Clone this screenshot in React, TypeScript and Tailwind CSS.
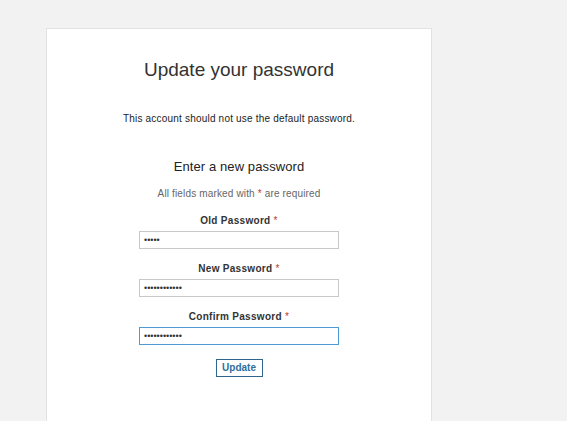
export default function App() {
  const fields = [
    { label: "Old Password", value: "12345", focus: false },
    { label: "New Password", value: "123456789012", focus: false },
    { label: "Confirm Password", value: "123456789012", focus: true },
  ]

  return (
    <div className="h-[421px] w-full overflow-hidden bg-[#f2f2f2] font-['Liberation_Sans',Arial,sans-serif]">
      <div className="ml-[46px] pt-[28px]">
        <div className="flex h-[393px] w-[386px] flex-col items-center border border-b-0 border-[#e2e2e2] bg-white text-[#333]">
          <h1 className="mt-[29px] text-[19px] leading-[24px] text-[#333]">Update your password</h1>
          <p className="mt-[31px] text-[10px] leading-[12px] tracking-[0.2px] text-[#222]">This account should not use the default password.</p>
          <h2 className="mt-[34px] text-[13px] leading-[16px] tracking-[0.1px] text-[#222]">Enter a new password</h2>
          <p className="mt-[13px] text-[10px] leading-[12px] tracking-[0.15px] text-[#666]">
            All fields marked with <span className="text-[#c0392b]">*</span> are required
          </p>
          {fields.map((f, i) => (
            <div key={f.label} className={`flex flex-col items-center ${i === 0 ? "mt-[15px]" : "mt-[14px]"}`}>
              <label className="text-[10px] font-bold leading-[12px] tracking-[0.3px] text-[#333]">
                {f.label} <span className="font-normal text-[#c0392b]">*</span>
              </label>
              <input
                type="password"
                readOnly
                defaultValue={f.value}
                className={`mt-[4px] h-[18px] w-[200px] border bg-white px-[4px] text-[9px] text-[#333] outline-none ${f.focus ? "border-[#4d9bd6]" : "border-[#c8c8c8]"}`}
              />
            </div>
          ))}
          <button className="mt-[14px] h-[18px] w-[47px] border border-[#2f6690] bg-white text-[10px] font-bold leading-[16px] text-[#2f6fa0]">
            Update
          </button>
        </div>
      </div>
    </div>
  )
}
